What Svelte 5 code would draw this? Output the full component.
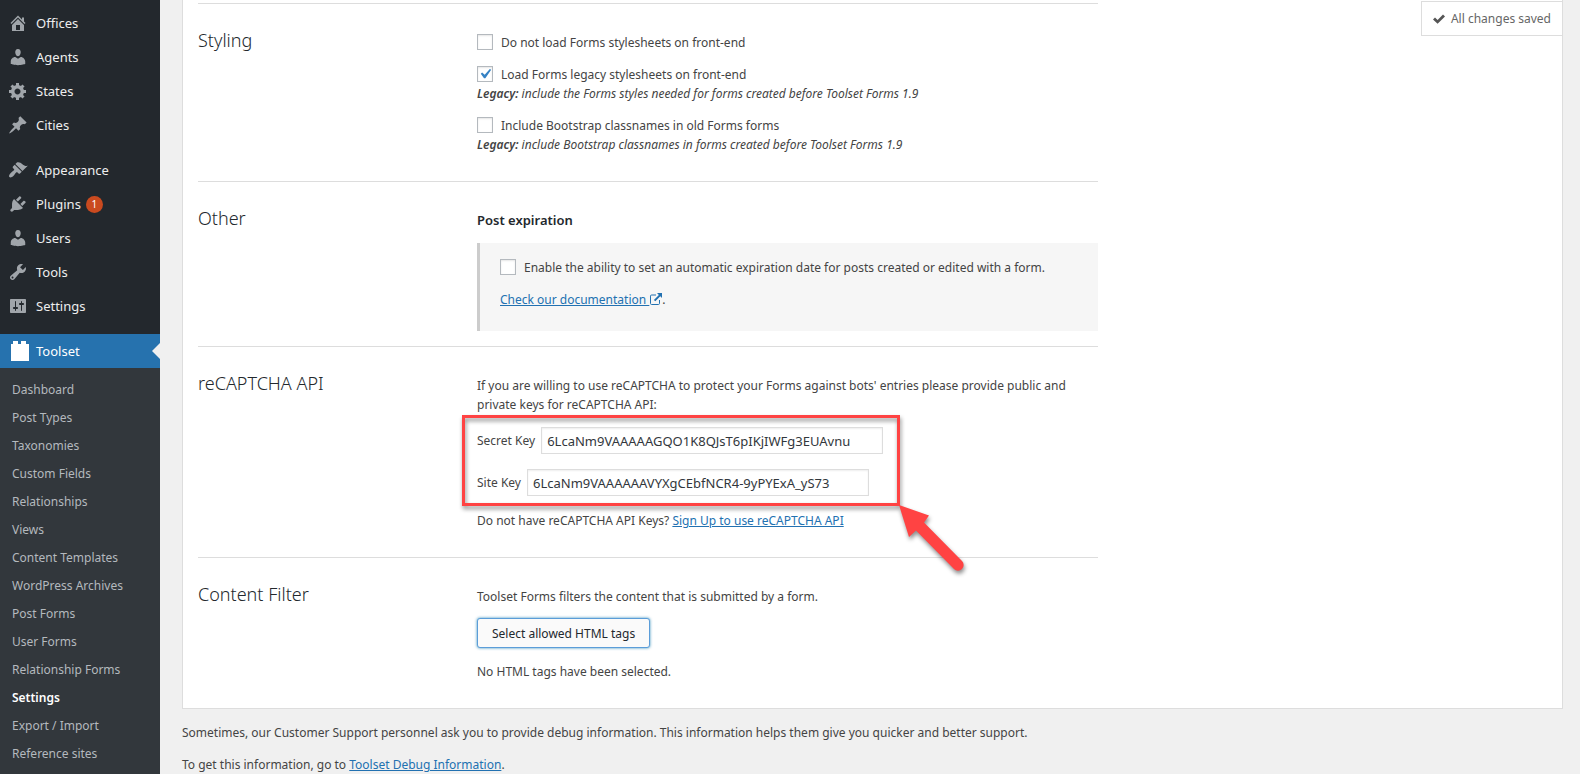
<script>
  const menuGroups = [
    [
      { label: 'Offices', icon: 'M16 8.5l1.53 1.53-1.06 1.06L10 4.6l-6.47 6.49-1.06-1.06L10 2.5l4 4v-2h2v4zm-6-2.46l6 5.99V18H4v-5.97zM12 17v-5H8v5h4z' },
      { label: 'Agents', icon: 'M10 9.25c-2.27 0-2.73-3.44-2.73-3.44C7 4.02 7.82 2 9.97 2c2.16 0 2.98 2.02 2.71 3.81 0 0-.41 3.44-2.68 3.44zm0 2.57L12.72 10c2.39 0 4.52 2.33 4.52 4.53v2.49s-3.65 1.13-7.24 1.13c-3.65 0-7.24-1.13-7.24-1.13v-2.49c0-2.25 1.94-4.48 4.47-4.48z' },
      { label: 'States', icon: 'M18 12h-2.18c-.17.7-.44 1.35-.81 1.93l1.54 1.54-2.1 2.1-1.54-1.54c-.58.36-1.23.63-1.91.79V19H8v-2.18c-.68-.16-1.33-.43-1.91-.79l-1.54 1.54-2.12-2.12 1.54-1.54c-.36-.58-.63-1.23-.79-1.91H1V9.03h2.17c.16-.7.44-1.35.8-1.94L2.43 5.55l2.1-2.1 1.54 1.54c.58-.37 1.24-.64 1.93-.81V2h3v2.18c.68.16 1.33.43 1.91.79l1.54-1.54 2.12 2.12-1.54 1.54c.36.59.64 1.24.8 1.94H18V12zm-8.5 1.5c1.66 0 3-1.34 3-3s-1.34-3-3-3-3 1.34-3 3 1.34 3 3 3z' },
      { label: 'Cities', icon: 'M10.44 3.02l1.82-1.82 6.36 6.35-1.83 1.82c-1.05-.68-2.48-.57-3.41.36l-.75.75c-.92.93-1.04 2.35-.35 3.41l-1.83 1.82-2.41-2.41-2.8 2.79c-.42.42-3.38 2.71-3.8 2.29s1.86-3.39 2.28-3.81l2.79-2.79L4.1 9.36l1.83-1.82c1.05.69 2.48.57 3.4-.36l.75-.75c.93-.92 1.05-2.35.36-3.41z' }
    ],
    [
      { label: 'Appearance', icon: 'M14.48 11.06L7.41 3.99l1.5-1.5c.5-.56 2.3-.47 3.51.32 1.21.8 1.43 1.28 2.91 2.1 1.18.64 2.45 1.26 4.45.85zm-.71.71L6.7 4.7 4.93 6.47c-.39.39-.39 1.02 0 1.41l1.06 1.06c.39.39.39 1.03 0 1.42-.6.6-1.43 1.11-2.21 1.69-.35.26-.7.53-1.01.84C1.43 14.23.4 16.08 1.4 17.07c.99 1 2.84-.03 4.18-1.36.31-.31.58-.66.85-1.02.57-.78 1.08-1.61 1.69-2.21.39-.39 1.02-.39 1.41 0l1.06 1.06c.39.39 1.02.39 1.41 0z' },
      { label: 'Plugins', count: 1, icon: 'M13.11 4.36L9.87 7.6 8 5.73l3.24-3.24c.35-.34 1.05-.2 1.56.32.52.51.66 1.21.31 1.55zm-8 1.77l.91-1.12 9.01 9.01-1.19.84c-.71.71-2.63 1.16-3.82 1.16H6.14L4.9 17.26c-.59.59-1.54.59-2.12 0-.59-.58-.59-1.53 0-2.12l1.24-1.24v-3.88c0-1.13.4-3.19 1.09-3.89zm7.26 3.97l3.24-3.24c.34-.35 1.04-.21 1.55.31.52.51.66 1.21.31 1.55l-3.24 3.25z' },
      { label: 'Users', icon: 'M10 9.25c-2.27 0-2.73-3.44-2.73-3.44C7 4.02 7.82 2 9.97 2c2.16 0 2.98 2.02 2.71 3.81 0 0-.41 3.44-2.68 3.44zm0 2.57L12.72 10c2.39 0 4.52 2.33 4.52 4.53v2.49s-3.65 1.13-7.24 1.13c-3.65 0-7.24-1.13-7.24-1.13v-2.49c0-2.25 1.94-4.48 4.47-4.48z' },
      { label: 'Tools', icon: 'M16.68 9.77c-1.34 1.34-3.3 1.67-4.95.99l-5.41 6.52c-.99.99-2.59.99-3.58 0s-.99-2.59 0-3.57l6.52-5.42c-.68-1.65-.35-3.61.99-4.95 1.28-1.28 3.12-1.62 4.72-1.06l-2.89 2.89 2.82 2.82 2.86-2.87c.53 1.58.18 3.39-1.08 4.65zM3.81 16.21c.4.39 1.04.39 1.43 0 .4-.4.4-1.04 0-1.43-.39-.4-1.03-.4-1.43 0-.39.39-.39 1.03 0 1.43z' },
      { label: 'Settings', icon: 'M18 16V4c0-.55-.45-1-1-1H3c-.55 0-1 .45-1 1v12c0 .55.45 1 1 1h14c.55 0 1-.45 1-1zM8 11h1c.55 0 1 .45 1 1s-.45 1-1 1H8v1.5c0 .28-.22.5-.5.5s-.5-.22-.5-.5V13H6c-.55 0-1-.45-1-1s.45-1 1-1h1V5.5c0-.28.22-.5.5-.5s.5.22.5.5V11zm5-2h-1c-.55 0-1-.45-1-1s.45-1 1-1h1V5.5c0-.28.22-.5.5-.5s.5.22.5.5V7h1c.55 0 1 .45 1 1s-.45 1-1 1h-1v5.5c0 .28-.22.5-.5.5s-.5-.22-.5-.5V9z' }
    ],
    [
      { label: 'Toolset', current: true, icon: 'M3 3h2V0h5v3h3V0h5v3h3v17H3z' }
    ]
  ];

  const submenu = [
    'Dashboard',
    'Post Types',
    'Taxonomies',
    'Custom Fields',
    'Relationships',
    'Views',
    'Content Templates',
    'WordPress Archives',
    'Post Forms',
    'User Forms',
    'Relationship Forms',
    'Settings',
    'Export / Import',
    'Reference sites'
  ];

  let noStylesheets = false;
  let legacyStylesheets = true;
  let bootstrapClassnames = false;
  let postExpiration = false;
  let secretKey = '6LcaNm9VAAAAAGQO1K8QJsT6pIKjIWFg3EUAvnu';
  let siteKey = '6LcaNm9VAAAAAAVYXgCEbfNCR4-9yPYExA_yS73';
</script>

<div class="admin">
  <nav class="sidebar">
    {#each menuGroups as group}
      <ul class="menu">
        {#each group as item}
          <li>
            <a href="#{item.label.toLowerCase()}" class="menu-link" class:current={item.current}>
              <svg class="menu-icon" viewBox="0 0 20 20" width="20" height="20"><path d={item.icon} /></svg>
              <span>{item.label}</span>
              {#if item.count}
                <span class="count">{item.count}</span>
              {/if}
            </a>
          </li>
        {/each}
      </ul>
    {/each}
    <ul class="submenu">
      {#each submenu as label}
        <li><a href="#toolset" class:selected={label === 'Settings'}>{label}</a></li>
      {/each}
    </ul>
  </nav>

  <main class="content">
    <div class="panel">
      <div class="saved">
        <svg viewBox="0 0 12 10" width="12" height="10"><path d="M0 5.6L2 3.6l2.6 2.5L10 .6l2 2L4.6 9.8z" /></svg>
        All changes saved
      </div>

      <section class="setting">
        <h2>Styling</h2>
        <div class="body">
          <p>
            <label class="check"><input type="checkbox" bind:checked={noStylesheets} />Do not load Forms stylesheets on front-end</label>
          </p>
          <p>
            <label class="check"><input type="checkbox" bind:checked={legacyStylesheets} />Load Forms legacy stylesheets on front-end</label>
            <em><strong>Legacy:</strong> include the Forms styles needed for forms created before Toolset Forms 1.9</em>
          </p>
          <p>
            <label class="check"><input type="checkbox" bind:checked={bootstrapClassnames} />Include Bootstrap classnames in old Forms forms</label>
            <em><strong>Legacy:</strong> include Bootstrap classnames in forms created before Toolset Forms 1.9</em>
          </p>
        </div>
      </section>

      <section class="setting boxed">
        <h2>Other</h2>
        <div class="body">
          <h3>Post expiration</h3>
          <div class="advanced">
            <p>
              <label class="check"><input type="checkbox" bind:checked={postExpiration} />Enable the ability to set an automatic expiration date for posts created or edited with a form.</label>
            </p>
            <p>
              <a href="#documentation">Check our documentation <svg class="external" viewBox="0 0 13 12" width="13" height="12"><path d="M7 2H2.600Q1.500 2 1.500 3.100v7.300q0 1.100 1.100 1.100h6.800q1.100 0 1.100-1.100V7" fill="none" stroke="currentColor" /><path d="M8 0h5v5l-1.7-1.7-5 5L4.9 6.9l5-5z" fill="currentColor" /></svg></a>.
            </p>
          </div>
        </div>
      </section>

      <section class="setting">
        <h2>reCAPTCHA API</h2>
        <div class="body">
          <p>If you are willing to use reCAPTCHA to protect your Forms against bots' entries please provide public and private keys for reCAPTCHA API:</p>
          <div class="keys">
            <div class="field">
              <label for="secret-key">Secret Key</label>
              <input type="text" id="secret-key" bind:value={secretKey} />
            </div>
            <div class="field">
              <label for="site-key">Site Key</label>
              <input type="text" id="site-key" bind:value={siteKey} />
            </div>
            <div class="highlight">
              <svg class="arrow" viewBox="0 0 72 72" width="72" height="72"><path d="M0 0L30 10.500L25 17.500L63 56A5.500 5.500 0 0 1 55 64L17 25.500L10 32z" /></svg>
            </div>
          </div>
          <p>Do not have reCAPTCHA API Keys? <a href="#recaptcha">Sign Up to use reCAPTCHA API</a></p>
        </div>
      </section>

      <section class="setting">
        <h2>Content Filter</h2>
        <div class="body">
          <p>Toolset Forms filters the content that is submitted by a form.</p>
          <button type="button">Select allowed HTML tags</button>
          <p>No HTML tags have been selected.</p>
        </div>
      </section>
    </div>

    <footer>
      <p>Sometimes, our Customer Support personnel ask you to provide debug information. This information helps them give you quicker and better support.</p>
      <p>To get this information, go to <a href="#debug">Toolset Debug Information</a>.</p>
    </footer>
  </main>
</div>

<style>
  :global(body) {
    margin: 0;
    background: #f0f0f0;
    color: #444;
    font-family: "Noto Sans", "Open Sans", sans-serif;
    font-size: 12px;
    line-height: 19px;
  }

  .admin {
    display: flex;
    min-height: 100vh;
  }

  ul {
    list-style: none;
    margin: 0;
    padding: 0;
  }

  p {
    margin: 0;
  }

  a {
    color: #2271b1;
  }

  .sidebar {
    flex: 0 0 160px;
    box-sizing: border-box;
    padding-top: 6px;
    background: #23282d;
  }

  .menu + .menu {
    margin-top: 11px;
  }

  .menu-link {
    position: relative;
    display: flex;
    align-items: center;
    height: 34px;
    padding-left: 8px;
    color: #eee;
    font-size: 13px;
    text-decoration: none;
  }

  .menu-icon {
    margin-right: 8px;
    fill: #a0a5aa;
  }

  .current {
    background: #2672ae;
    color: #fff;
  }

  .current .menu-icon {
    overflow: visible;
    fill: #fff;
  }

  .current::after {
    content: "";
    position: absolute;
    right: 0;
    top: 9px;
    border: 8px solid transparent;
    border-left-width: 0;
    border-right-color: #f0f0f0;
  }

  .count {
    width: 17px;
    height: 17px;
    margin-left: 5px;
    border-radius: 50%;
    background: #ca4a1f;
    color: #fff;
    font-size: 10px;
    line-height: 17px;
    text-align: center;
  }

  .submenu {
    padding: 8px 0 6px;
    background: #32373c;
  }

  .submenu a {
    display: block;
    padding: 0 12px;
    color: #b4b9be;
    line-height: 28px;
    text-decoration: none;
  }

  .submenu .selected {
    color: #fff;
    font-weight: 600;
  }

  .content {
    flex: 1;
    padding: 0 17px 0 22px;
  }

  .panel {
    position: relative;
    padding: 3px 15px 0;
    border: 1px solid #ddd;
    border-top: 0;
    background: #fff;
  }

  .saved {
    position: absolute;
    top: 1px;
    right: 0;
    display: flex;
    align-items: center;
    gap: 6px;
    padding: 7px 11px;
    border: 1px solid #ddd;
    border-right: 0;
    background: #fff;
    color: #666;
  }

  .saved svg {
    fill: #555;
  }

  .setting {
    display: flex;
    max-width: 900px;
    padding: 29px 0 27px;
    border-top: 1px solid #ddd;
  }

  .boxed {
    padding-bottom: 15px;
  }

  h2 {
    flex: 0 0 279px;
    margin: 0;
    color: #23282d;
    font-size: 18px;
    font-weight: 300;
    line-height: 14px;
  }

  h3 {
    margin: 0;
    color: #23282d;
    font-size: 13px;
    font-weight: 600;
    line-height: 19px;
  }

  .body {
    flex: 1;
  }

  .body p + p {
    margin-top: 13px;
  }

  .body em {
    display: block;
  }

  .body em strong {
    font-weight: 600;
  }

  .check {
    display: flex;
    align-items: flex-start;
    gap: 8px;
  }

  input[type="checkbox"] {
    appearance: none;
    flex: none;
    width: 16px;
    height: 16px;
    margin: 1px 0 0;
    border: 1px solid #b4b9be;
    background: #fff center / 20px no-repeat;
    box-shadow: inset 0 1px 2px rgba(0, 0, 0, 0.1);
  }

  input[type="checkbox"]:checked {
    background-image: url("data:image/svg+xml,%3Csvg xmlns='http://www.w3.org/2000/svg' viewBox='0 0 20 20'%3E%3Cpath d='M14.83 4.89l1.34.94-5.81 8.38H9.02L5.78 9.67l1.34-1.25 2.57 2.4z' fill='%233582c4'/%3E%3C/svg%3E");
  }

  .advanced {
    margin-top: 13px;
    padding: 15px 20px 22px;
    border-left: 3px solid #ccc;
    background: #f6f6f6;
  }

  .external {
    vertical-align: -1px;
  }

  .keys {
    position: relative;
    display: flex;
    flex-direction: column;
    gap: 15px;
    margin: 13px 0 15px;
  }

  .field {
    display: flex;
    align-items: center;
    gap: 6px;
  }

  .field input {
    box-sizing: border-box;
    width: 342px;
    height: 27px;
    padding: 3px 5px;
    border: 1px solid #ddd;
    background: #fff;
    box-shadow: inset 0 1px 2px rgba(0, 0, 0, 0.07);
    color: #32373c;
    font-family: inherit;
    font-size: 13px;
  }

  /* red callout lying over the two key fields */
  .highlight {
    position: absolute;
    top: -12px;
    left: -15px;
    box-sizing: border-box;
    width: 438px;
    height: 91px;
    border: 3px solid #ff4343;
    filter: drop-shadow(1px 3px 2px rgba(0, 0, 0, 0.45));
    pointer-events: none;
  }

  .arrow {
    position: absolute;
    top: 100%;
    left: 100%;
    margin: 2px;
    fill: #ff4343;
  }

  button {
    height: 30px;
    margin: 12px 0 14px;
    padding: 0 14px;
    border: 1px solid #5b9dd9;
    border-radius: 3px;
    background: #fafafa;
    box-shadow: 0 0 3px rgba(0, 115, 170, 0.8);
    color: #23282d;
    font-family: inherit;
    font-size: 12px;
  }

  footer {
    padding-top: 14px;
  }

  footer p + p {
    margin-top: 13px;
  }
</style>
